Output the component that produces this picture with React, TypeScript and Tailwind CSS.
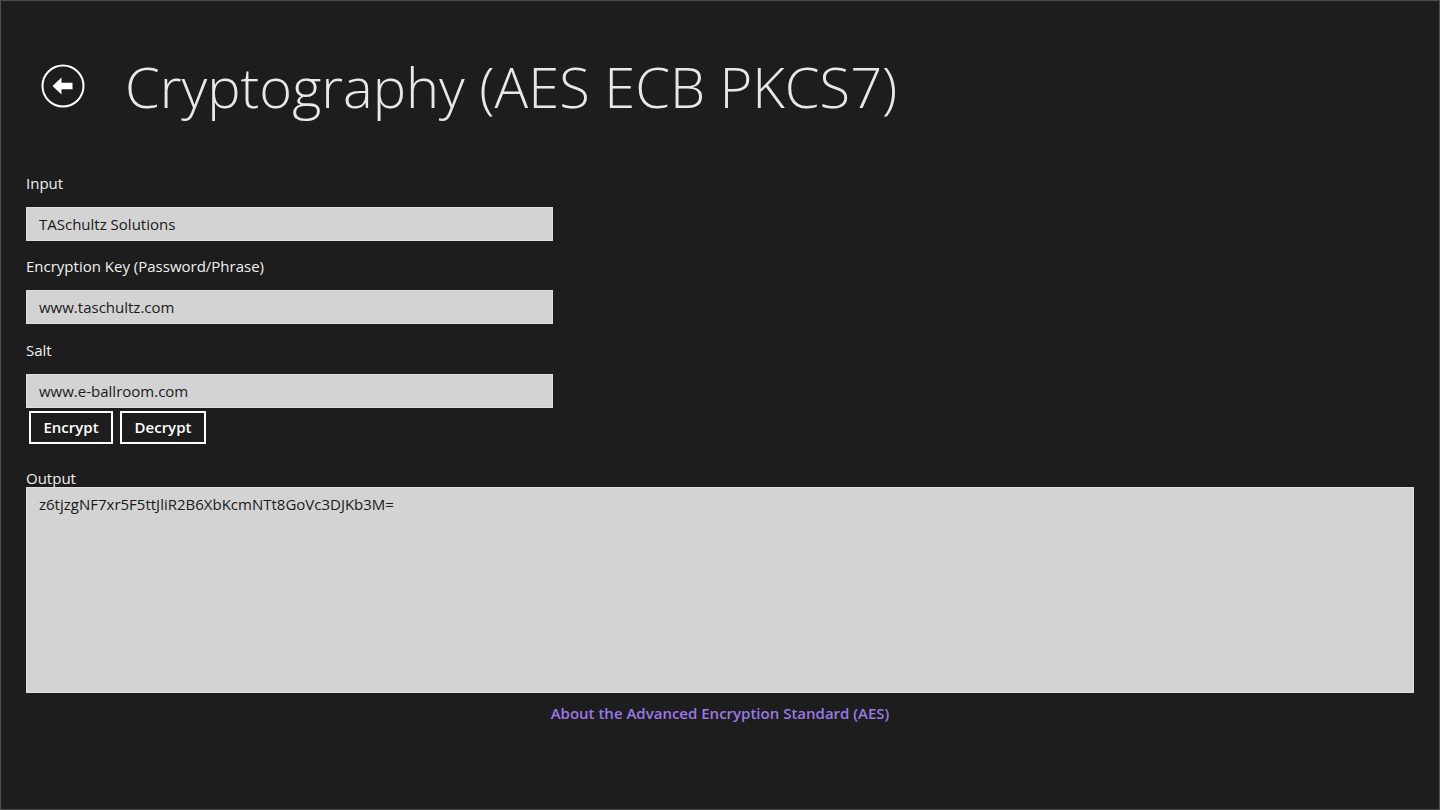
import React from "react";

const font = { fontFamily: '"Open Sans", "Noto Sans", sans-serif' };

function Field({ label, value, mt }: { label: string; value: string; mt: string }) {
  return (
    <div className={"flex flex-col " + mt}>
      <div className="h-[20px] text-[15px] leading-[20px] text-[#f0f0f0]">{label}</div>
      <div className="mt-[14px] flex h-[34px] w-[527px] items-center border border-[#dedede] bg-[#d3d3d3] px-[12px] text-[15px] text-[#1a1a1a]">
        {value}
      </div>
    </div>
  );
}

export default function App() {
  return (
    <div
      className="flex h-[810px] w-[1440px] flex-col overflow-hidden border border-[#4d4d4d] bg-[#1d1d1d] text-white"
      style={font}
    >
      <div className="flex h-[172px] items-start pl-[40px] pt-[42px]">
        <div className="mt-[21px] flex h-[44px] w-[44px] items-center justify-center">
          <svg width="44" height="44" viewBox="0 0 44 44">
            <circle cx="22" cy="22" r="20.5" fill="none" stroke="#ffffff" strokeWidth="2" />
            <path d="M11.5 22 L20.5 13.5 L20.5 18.8 L31.5 18.8 L31.5 25.2 L20.5 25.2 L20.5 30.5 Z" fill="#ffffff" />
          </svg>
        </div>
        <div className="ml-[40px] text-[56px] font-light leading-[86px] text-[#e8e8e8]">
          Cryptography (AES ECB PKCS7)
        </div>
      </div>
      <div className="flex flex-col pl-[25px]">
        <Field label="Input" value="TASchultz Solutions" mt="mt-0" />
        <Field label="Encryption Key (Password/Phrase)" value="www.taschultz.com" mt="mt-[15px]" />
        <Field label="Salt" value="www.e-ballroom.com" mt="mt-[16px]" />
        <div className="mt-[3px] flex gap-[7px] pl-[3px]">
          <button className="flex h-[33px] w-[84px] items-center justify-center border-2 border-white bg-[#1d1d1d] text-[15px] font-semibold text-white">
            Encrypt
          </button>
          <button className="flex h-[33px] w-[86px] items-center justify-center border-2 border-white bg-[#1d1d1d] text-[15px] font-semibold text-white">
            Decrypt
          </button>
        </div>
        <div className="mt-[25px] h-[18px] text-[15px] leading-[18px] text-[#f0f0f0]">Output</div>
        <div className="h-[206px] w-[1388px] border border-[#dedede] bg-[#d3d3d3] px-[12px] pt-[5px] text-[15px] text-[#1a1a1a]">
          z6tjzgNF7xr5F5ttJliR2B6XbKcmNTt8GoVc3DJKb3M=
        </div>
        <div className="mt-[10px] h-[20px] w-[1388px] text-center text-[15px] font-semibold leading-[20px] text-[#9b78e6]">
          About the Advanced Encryption Standard (AES)
        </div>
      </div>
    </div>
  );
}
